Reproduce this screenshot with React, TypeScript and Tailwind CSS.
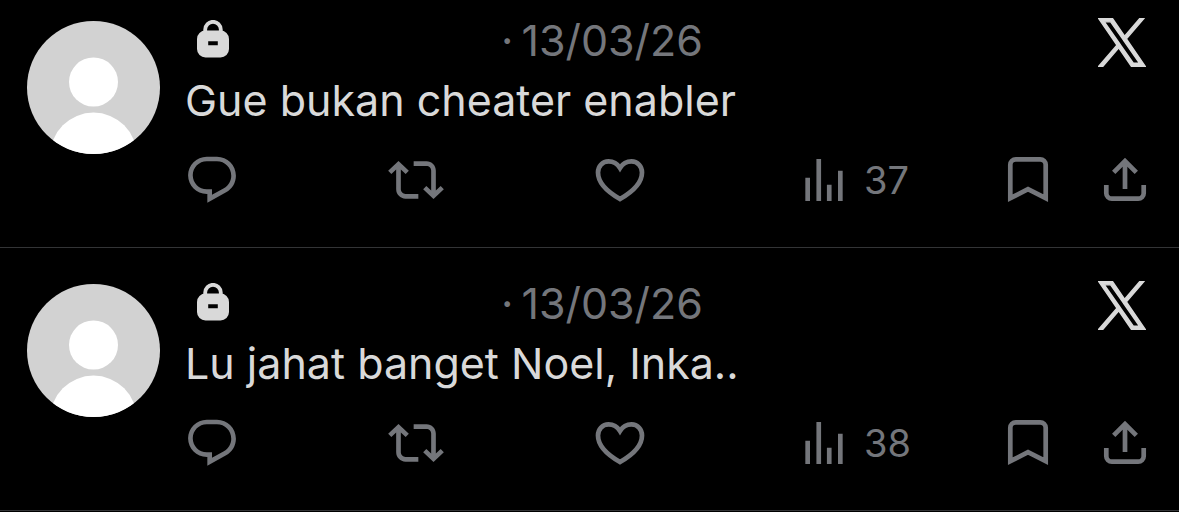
import React from 'react';

type Post = {
  id: number;
  date: string;
  text: string;
  views: number;
};

const posts: Post[] = [
  { id: 1, date: '13/03/26', text: 'Gue bukan cheater enabler', views: 37 },
  { id: 2, date: '13/03/26', text: 'Lu jahat banget Noel, Inka..', views: 38 },
];

const App = () => {
  return (
    <main className="min-h-screen bg-black font-['Inter',sans-serif] text-[#d9d9d9]">
      {posts.map((post) => (
        <PostItem key={post.id} post={post} />
      ))}
    </main>
  );
};

const PostItem = ({ post }: { post: Post }) => {
  return (
    <article className="flex gap-6 border-b border-[#333436] pt-[25px] pr-[26px] pb-[39px] pl-[27px] first:pt-2.5">
      <Avatar />
      <div className="min-w-0 flex-1">
        {/* Header */}
        <div className="flex h-[60px] items-start">
          <LockIcon />
          <a href="#post" className="ml-[272px] flex gap-2 text-[43px] leading-[60px] text-[#74767b]">
            <span>·</span>
            <time>{post.date}</time>
          </a>
          <XLogo />
        </div>

        <p className="pl-px text-[43px] leading-[60px]">{post.text}</p>

        {/* Actions */}
        <div className="mt-[22px] flex text-[#74767b]">
          <ActionButton label="Reply">
            <path d="M1.751 10c0-4.42 3.584-8 8.005-8h4.366c4.49 0 8.129 3.64 8.129 8.13 0 2.96-1.607 5.68-4.196 7.11l-8.054 4.46v-3.69h-.067c-4.49.1-8.183-3.51-8.183-8.01zm8.005-6c-3.317 0-6.005 2.69-6.005 6 0 3.37 2.77 6.08 6.138 6.01l.351-.01h1.761v2.3l5.087-2.81c1.951-1.08 3.163-3.13 3.163-5.36 0-3.39-2.744-6.13-6.129-6.13H9.756z" />
          </ActionButton>
          <ActionButton label="Repost">
            <path d="M4.5 3.88l4.432 4.14-1.364 1.46L5.5 7.55V16c0 1.1.896 2 2 2H13v2H7.5c-2.209 0-4-1.79-4-4V7.55L1.432 9.48.068 8.02 4.5 3.88zM16.5 6H11V4h5.5c2.209 0 4 1.79 4 4v8.45l2.068-1.93 1.364 1.46-4.432 4.14-4.432-4.14 1.364-1.46 2.068 1.93V8c0-1.1-.896-2-2-2z" />
          </ActionButton>
          <ActionButton label="Like" outline>
            <path d="M28 47C14 39 6 30.5 6 20.5C6 14 10.5 9.4 16.5 9.4C21.5 9.4 25.5 12 28 16C30.5 12 34.5 9.4 39.5 9.4C45.5 9.4 50 14 50 20.5C50 30.5 42 39 28 47Z" />
          </ActionButton>
          <ActionButton label="Views" count={post.views}>
            <path d="M8.75 21V3h2v18h-2zM18 21V8h2v13h-2zM4 21l.004-10h2L6 21H4zm9.248 0v-7h2v7h-2z" />
          </ActionButton>
          <div className="flex gap-[41px]">
            <ActionButton label="Bookmark" outline>
              <path d="M10.3 46.2V12.8A5.5 5.5 0 0 1 15.8 7.3H40.2A5.5 5.5 0 0 1 45.7 12.8V46.2L28 37.2Z" />
            </ActionButton>
            <ActionButton label="Share" outline>
              <path d="M9.3 33V41.2A5.5 5.5 0 0 0 14.8 46.7H41.2A5.5 5.5 0 0 0 46.7 41.2V33M28 37V9M16.7 20.3L28 9L39.3 20.3" />
            </ActionButton>
          </div>
        </div>
      </div>
    </article>
  );
};

const ActionButton = ({
  label,
  count,
  outline,
  children,
}: {
  label: string;
  count?: number;
  outline?: boolean;
  children: React.ReactNode;
}) => {
  return (
    <button type="button" aria-label={label} className="flex h-14 flex-1 items-center gap-3">
      {outline ? (
        <svg viewBox="0 0 56 56" className="size-14 shrink-0" fill="none" stroke="currentColor" strokeWidth="4.7">
          {children}
        </svg>
      ) : (
        <svg viewBox="0 0 24 24" className="size-14 shrink-0" fill="currentColor">
          {children}
        </svg>
      )}
      {count !== undefined && <span className="text-[38px] leading-none">{count}</span>}
    </button>
  );
};

const Avatar = () => {
  return (
    <div className="mt-[11px] size-[133px] shrink-0 overflow-hidden rounded-full bg-[#d2d2d2]">
      <svg viewBox="0 0 133 133" className="size-full" fill="#fff">
        <circle cx="66.5" cy="61" r="24.5" />
        <circle cx="66.5" cy="135" r="43.4" />
      </svg>
    </div>
  );
};

const LockIcon = () => {
  return (
    <svg viewBox="0 0 32 38" className="mt-2.5 ml-[13px] h-[38px] w-8 shrink-0">
      <path d="M8.2 14V9.6a7.8 7.8 0 0 1 15.6 0V14" fill="none" stroke="currentColor" strokeWidth="3.8" />
      <path
        fillRule="evenodd"
        fill="currentColor"
        d="M8.5 10.6H23.5A8.5 8.5 0 0 1 32 19.1V29A8.5 8.5 0 0 1 23.5 37.5H8.5A8.5 8.5 0 0 1 0 29V19.1A8.5 8.5 0 0 1 8.5 10.6ZM11.2 21.2V25.2H20.8V21.2Z"
      />
    </svg>
  );
};

const XLogo = () => {
  return (
    <svg
      viewBox="-20 -20 1240 1267"
      className="mt-2 mr-[7px] ml-auto h-[49px] w-12 shrink-0"
      fill="currentColor"
      stroke="currentColor"
      strokeWidth="36"
    >
      <path d="M714.163 519.284L1160.89 0H1055.03L667.137 450.887L357.328 0H0L468.492 681.821L0 1226.37H105.866L515.491 750.218L842.672 1226.37H1200L714.137 519.284H714.163ZM569.165 687.828L521.697 619.934L144.011 79.6944H306.615L611.412 515.685L658.88 583.579L1055.08 1150.3H892.476L569.165 687.854V687.828Z" />
    </svg>
  );
};

export default App;
